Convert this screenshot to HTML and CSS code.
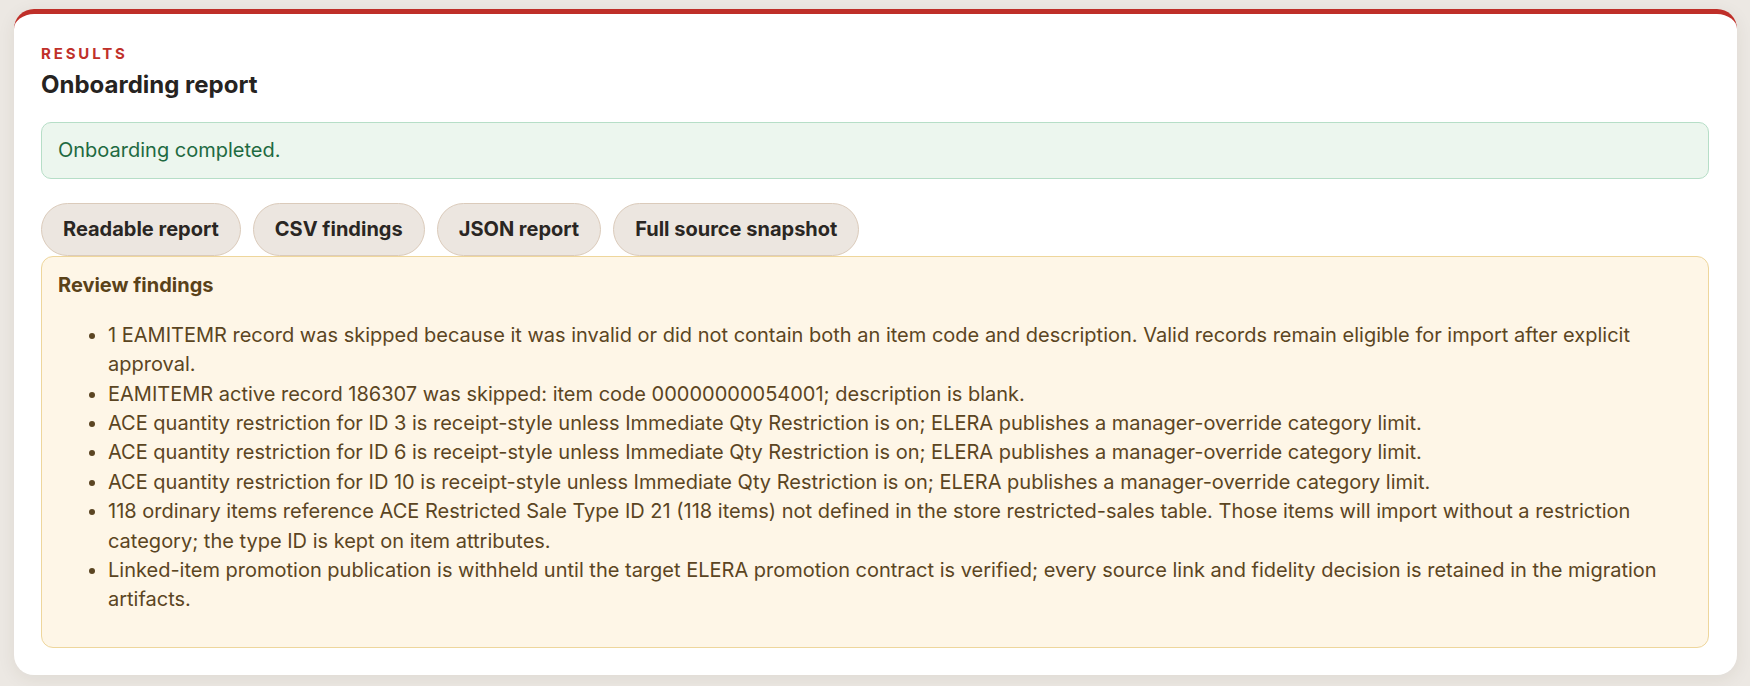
FILE: index.html
```html
<!DOCTYPE html>
<html lang="en">

<head>
    <meta charset="UTF-8">
    <title>Onboarding report</title>
    <link rel="stylesheet" href="styles.css">
</head>

<body>
    <section class="card">
        <p class="eyebrow">Results</p>
        <h2 class="card__title">Onboarding report</h2>

        <div class="notice notice--success">Onboarding completed.</div>

        <div class="tabs">
            <button class="tab">Readable report</button>
            <button class="tab">CSV findings</button>
            <button class="tab">JSON report</button>
            <button class="tab">Full source snapshot</button>
        </div>

        <div class="findings">
            <h3 class="findings__title">Review findings</h3>
            <ul class="findings__list">
                <li>1 EAMITEMR record was skipped because it was invalid or did not contain both an item code and description. Valid records remain eligible for import after explicit approval.</li>
                <li>EAMITEMR active record 186307 was skipped: item code 00000000054001; description is blank.</li>
                <li>ACE quantity restriction for ID 3 is receipt-style unless Immediate Qty Restriction is on; ELERA publishes a manager-override category limit.</li>
                <li>ACE quantity restriction for ID 6 is receipt-style unless Immediate Qty Restriction is on; ELERA publishes a manager-override category limit.</li>
                <li>ACE quantity restriction for ID 10 is receipt-style unless Immediate Qty Restriction is on; ELERA publishes a manager-override category limit.</li>
                <li>118 ordinary items reference ACE Restricted Sale Type ID 21 (118 items) not defined in the store restricted-sales table. Those items will import without a restriction category; the type ID is kept on item attributes.</li>
                <li>Linked-item promotion publication is withheld until the target ELERA promotion contract is verified; every source link and fidelity decision is retained in the migration artifacts.</li>
            </ul>
        </div>
    </section>
</body>

</html>
```

FILE: styles.css
```css
html {
    box-sizing: border-box;
}

*,
*:before,
*:after {
    box-sizing: inherit;
}

body {
    margin: 0;
    padding: 9px 13px 12px 14px;
    background: #ece8e3;
    font-family: Inter, "Noto Sans", sans-serif;
    font-size: 20px;
    line-height: 1.47;
    color: #262321;
}

.card {
    background: #fff;
    border-top: 5px solid #bf2f29;
    border-radius: 20px;
    padding: 29px 28px 27px 27px;
    box-shadow: 0 4px 18px rgba(70, 50, 30, 0.08);
}

.eyebrow {
    margin: 0;
    color: #c0302a;
    font-size: 15px;
    font-weight: 700;
    letter-spacing: 0.19em;
    text-transform: uppercase;
    line-height: 1.4;
}

.card__title {
    margin: 4px 0 0;
    font-size: 24px;
    font-weight: 700;
    line-height: 1.4;
}

.notice {
    margin-top: 20px;
    padding: 13px 16px;
    border-radius: 10px;
}

.notice--success {
    background: #ecf6ee;
    border: 1px solid #b6dec7;
    color: #1e6a41;
}

.tabs {
    display: flex;
    gap: 12px;
    margin-top: 24px;
}

.tab {
    font: inherit;
    font-weight: 700;
    color: #2a2623;
    background: #ece6e0;
    border: 1px solid #dbcbbb;
    border-radius: 999px;
    padding: 11px 21px;
    cursor: pointer;
}

.tab:hover {
    background: #e3dbd2;
}

.findings {
    background: #fef6e7;
    border: 1px solid #eed69c;
    border-radius: 12px;
    padding: 14px 16px 15px;
    color: #5b4522;
}

.findings__title {
    margin: 0;
    font-size: 20px;
    font-weight: 700;
    color: #5a4219;
}

.findings__list {
    margin: 20px 0 17px;
    padding-left: 50px;
}
```
